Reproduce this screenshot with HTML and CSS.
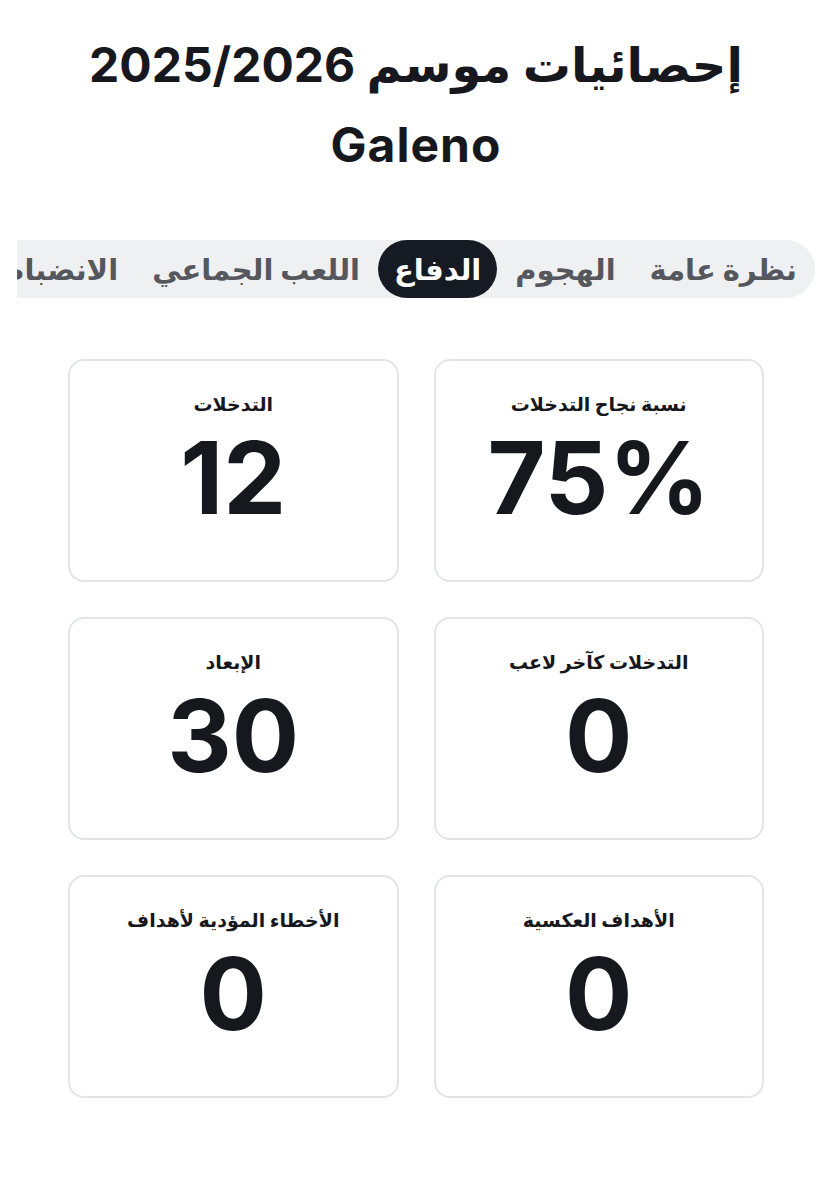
FILE: index.html
```html
<!DOCTYPE html>
<html lang="ar" dir="rtl">
<head>
<meta charset="utf-8">
<title>إحصائيات موسم 2025/2026 Galeno</title>
<link rel="stylesheet" href="styles.css">
</head>
<body>
<main class="page">
  <h1 class="title">إحصائيات موسم <span class="latin">2025/2026</span><br><span class="latin-name">Galeno</span></h1>

  <nav class="tabs-wrap">
    <div class="tabs">
      <span class="tab">نظرة عامة</span>
      <span class="tab">الهجوم</span>
      <span class="tab active">الدفاع</span>
      <span class="tab">اللعب الجماعي</span>
      <span class="tab">الانضباط</span>
    </div>
  </nav>

  <section class="grid">
    <div class="card"><div class="label">نسبة نجاح التدخلات</div><div class="value">75%</div></div>
    <div class="card"><div class="label">التدخلات</div><div class="value">12</div></div>
    <div class="card"><div class="label">التدخلات كآخر لاعب</div><div class="value">0</div></div>
    <div class="card"><div class="label">الإبعاد</div><div class="value">30</div></div>
    <div class="card"><div class="label">الأهداف العكسية</div><div class="value">0</div></div>
    <div class="card"><div class="label">الأخطاء المؤدية لأهداف</div><div class="value">0</div></div>
  </section>
</main>
</body>
</html>
```

FILE: styles.css
```css
html, body {
  margin: 0;
  padding: 0;
  background: #ffffff;
}

body {
  direction: rtl;
  font-family: Inter, "DejaVu Sans", sans-serif;
  color: #17181d;
}

.page {
  padding-top: 25px;
}

.title {
  margin: 0;
  font-size: 48px;
  line-height: 80px;
  font-weight: 700;
  text-align: center;
  color: #17181d;
}

.latin {
  letter-spacing: 2px;
}

.latin-name {
  letter-spacing: 1px;
}

.tabs-wrap {
  margin: 55px 17px 0;
  overflow: hidden;
  white-space: nowrap;
}

.tabs {
  display: inline-flex;
  align-items: center;
  gap: 2px;
  height: 58px;
  padding: 0 2px;
  background: #eff0f2;
  border-radius: 29px;
}

.tab {
  display: flex;
  align-items: center;
  height: 58px;
  padding: 0 16px;
  font-size: 29px;
  font-weight: 700;
  color: #55575d;
  border-radius: 29px;
}

.tab.active {
  background: #161a22;
  color: #ffffff;
}

.grid {
  display: grid;
  grid-template-columns: 1fr 1fr;
  column-gap: 35px;
  row-gap: 35px;
  margin: 61px 68px 0;
}

.card {
  height: 223px;
  box-sizing: border-box;
  border: 2px solid #e3e4e7;
  border-radius: 16px;
  padding-top: 31px;
  display: flex;
  flex-direction: column;
  align-items: center;
}

.label {
  font-size: 19px;
  line-height: 26px;
  font-weight: 700;
  color: #17181d;
}

.value {
  margin-top: 10px;
  font-size: 100px;
  line-height: 100px;
  font-weight: 700;
  color: #17181d;
  direction: ltr;
}
```
